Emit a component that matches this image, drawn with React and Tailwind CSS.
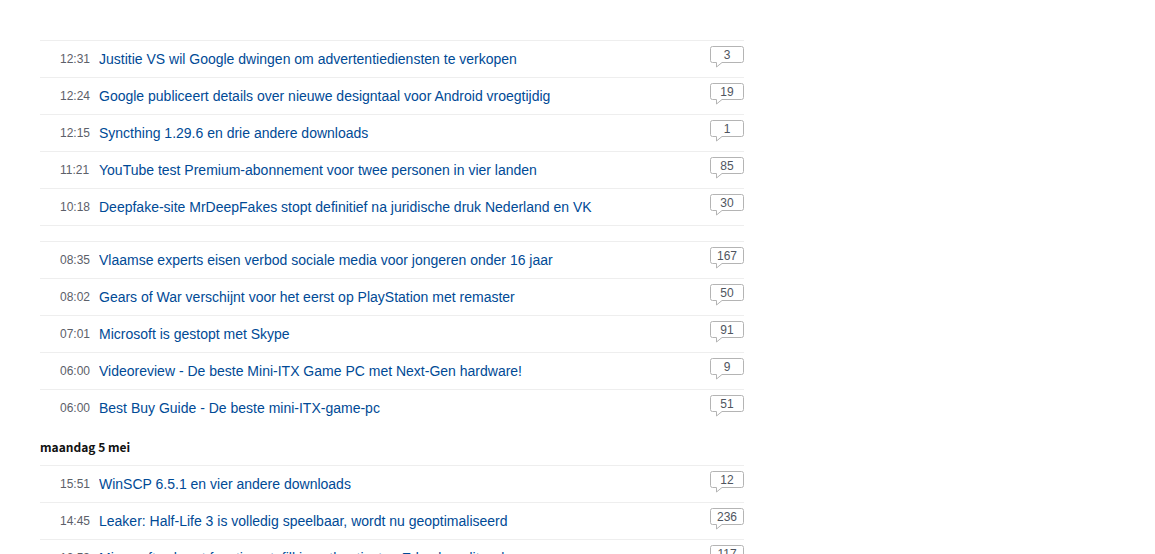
const groups = [
  {
    id: 'today-late',
    closed: true,
    items: [
      { time: '12:31', title: 'Justitie VS wil Google dwingen om advertentiediensten te verkopen', comments: 3 },
      { time: '12:24', title: 'Google publiceert details over nieuwe designtaal voor Android vroegtijdig', comments: 19 },
      { time: '12:15', title: 'Syncthing 1.29.6 en drie andere downloads', comments: 1 },
      { time: '11:21', title: 'YouTube test Premium-abonnement voor twee personen in vier landen', comments: 85 },
      { time: '10:18', title: 'Deepfake-site MrDeepFakes stopt definitief na juridische druk Nederland en VK', comments: 30 },
    ],
  },
  {
    id: 'today-early',
    items: [
      { time: '08:35', title: 'Vlaamse experts eisen verbod sociale media voor jongeren onder 16 jaar', comments: 167 },
      { time: '08:02', title: 'Gears of War verschijnt voor het eerst op PlayStation met remaster', comments: 50 },
      { time: '07:01', title: 'Microsoft is gestopt met Skype', comments: 91 },
      { time: '06:00', title: 'Videoreview - De beste Mini-ITX Game PC met Next-Gen hardware!', comments: 9 },
      { time: '06:00', title: 'Best Buy Guide - De beste mini-ITX-game-pc', comments: 51 },
    ],
  },
  {
    id: 'monday',
    heading: 'maandag 5 mei',
    items: [
      { time: '15:51', title: 'WinSCP 6.5.1 en vier andere downloads', comments: 12 },
      { time: '14:45', title: 'Leaker: Half-Life 3 is volledig speelbaar, wordt nu geoptimaliseerd', comments: 236 },
      { time: '12:53', title: 'Microsoft schrapt functie autofill in authenticator, Edge kan dit wel', comments: 117 },
    ],
  },
];

function CommentCount({ count }) {
  return (
    <a
      href="#reacties"
      aria-label={`${count} reacties`}
      className="relative mt-1 block h-6 w-[34px] shrink-0 text-center text-[12px] leading-5 text-[#4f5560]"
    >
      <svg className="absolute inset-0" width="34" height="24" viewBox="0 0 34 24" fill="none" aria-hidden="true">
        <path
          d="M2.5 1.5H31.5Q33.5 1.5 33.5 3.5V15.5Q33.5 17.5 31.5 17.5H12L6.5 22V17.5H2.5Q.5 17.5 .5 15.5V3.5Q.5 1.5 2.5 1.5Z"
          stroke="#b4b4b4"
        />
      </svg>
      <span className="relative">{count}</span>
    </a>
  );
}

function NewsItem({ item }) {
  return (
    <li className="flex h-[37px] border-t border-[#eeeeee] pl-5">
      <time className="w-[39px] shrink-0 text-[12px] leading-9 text-[#5c6069]">{item.time}</time>
      <a href="#nieuws" className="min-w-0 flex-1 truncate text-[14px] leading-9 text-[#004a96] hover:underline">
        {item.title}
      </a>
      <CommentCount count={item.comments} />
    </li>
  );
}

export default function App() {
  return (
    <div className="h-screen overflow-hidden bg-white font-['Liberation_Sans',Arial,sans-serif]">
      <main className="ml-10 max-w-[704px] pt-10">
        {groups.map((group) => (
          <section key={group.id}>
            {group.heading && (
              <h2 className="pt-[11px] pb-2 font-['Noto_Sans_CJK_JP',sans-serif] text-[12px] leading-5 font-bold text-[#111111]">
                {group.heading}
              </h2>
            )}
            <ul className={group.closed ? 'mb-[15px] border-b border-[#eeeeee]' : ''}>
              {group.items.map((item) => (
                <NewsItem key={item.title} item={item} />
              ))}
            </ul>
          </section>
        ))}
      </main>
    </div>
  );
}
